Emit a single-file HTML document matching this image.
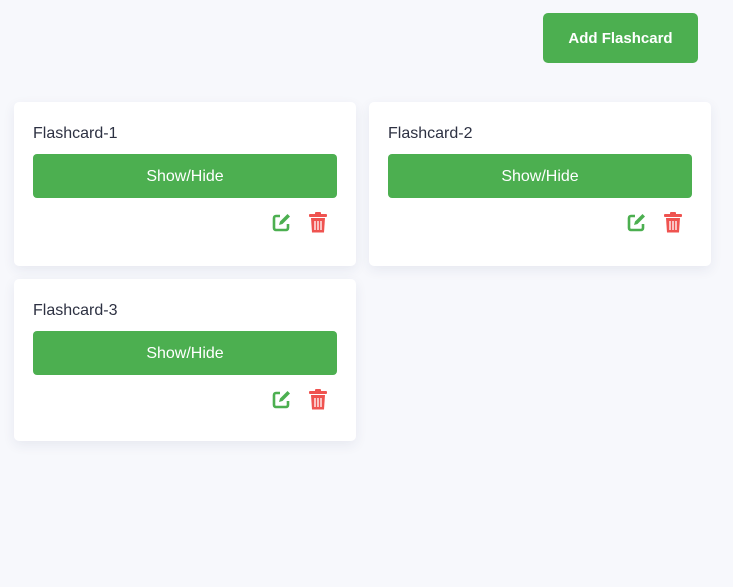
<!DOCTYPE html>
<html><head><style>
body{margin:0;background:#f7f8fc;font-family:"Liberation Sans",sans-serif;width:733px;height:587px;position:relative;overflow:hidden}
.add{position:absolute;left:543px;top:13px;width:155px;height:50px;background:#4caf50;border-radius:5px;color:#fff;font-size:15px;font-weight:bold;display:flex;align-items:center;justify-content:center}
.card{position:absolute;width:342px;height:164px;background:#fff;border-radius:5px;box-shadow:0 4px 12px rgba(40,50,100,0.08)}
.t{position:absolute;left:19px;top:23px;font-size:16px;color:#2d3142}
.b{position:absolute;left:19px;top:52px;width:304px;height:44px;background:#4caf50;border-radius:4px;color:#fff;font-size:16px;display:flex;align-items:center;justify-content:center;padding-top:1px;box-sizing:border-box}
.e{position:absolute;left:257px;top:110px}
.d{position:absolute;left:295px;top:110px}
</style></head><body>
<div class="add">Add Flashcard</div>
<div class="card" style="left:14px;top:102px"><div class="t">Flashcard-1</div><div class="b">Show/Hide</div>
<svg class="e" width="21" height="21" viewBox="0 0 21 21"><path d="M9 4H5a2 2 0 0 0-2 2v10a2 2 0 0 0 2 2h10a2 2 0 0 0 2-2v-4" fill="none" stroke="#4caf50" stroke-width="2.6"/><path d="M8 13l1-3.5 7.5-7.5 2.5 2.5-7.5 7.5z" fill="#4caf50"/></svg>
<svg class="d" width="18" height="21" viewBox="0 0 18 21"><rect x="0" y="2" width="18" height="3" rx="1" fill="#ef5350"/><rect x="6" y="0" width="6" height="3" rx="1" fill="#ef5350"/><path d="M2 6h14l-1 14.5H3z" fill="#ef5350"/><path d="M6 9v9M9 9v9M12 9v9" stroke="#fff" stroke-width="1.3"/></svg></div>
<div class="card" style="left:369px;top:102px"><div class="t">Flashcard-2</div><div class="b">Show/Hide</div>
<svg class="e" width="21" height="21" viewBox="0 0 21 21"><path d="M9 4H5a2 2 0 0 0-2 2v10a2 2 0 0 0 2 2h10a2 2 0 0 0 2-2v-4" fill="none" stroke="#4caf50" stroke-width="2.6"/><path d="M8 13l1-3.5 7.5-7.5 2.5 2.5-7.5 7.5z" fill="#4caf50"/></svg>
<svg class="d" width="18" height="21" viewBox="0 0 18 21"><rect x="0" y="2" width="18" height="3" rx="1" fill="#ef5350"/><rect x="6" y="0" width="6" height="3" rx="1" fill="#ef5350"/><path d="M2 6h14l-1 14.5H3z" fill="#ef5350"/><path d="M6 9v9M9 9v9M12 9v9" stroke="#fff" stroke-width="1.3"/></svg></div>
<div class="card" style="left:14px;top:279px;height:162px"><div class="t">Flashcard-3</div><div class="b">Show/Hide</div>
<svg class="e" width="21" height="21" viewBox="0 0 21 21"><path d="M9 4H5a2 2 0 0 0-2 2v10a2 2 0 0 0 2 2h10a2 2 0 0 0 2-2v-4" fill="none" stroke="#4caf50" stroke-width="2.6"/><path d="M8 13l1-3.5 7.5-7.5 2.5 2.5-7.5 7.5z" fill="#4caf50"/></svg>
<svg class="d" width="18" height="21" viewBox="0 0 18 21"><rect x="0" y="2" width="18" height="3" rx="1" fill="#ef5350"/><rect x="6" y="0" width="6" height="3" rx="1" fill="#ef5350"/><path d="M2 6h14l-1 14.5H3z" fill="#ef5350"/><path d="M6 9v9M9 9v9M12 9v9" stroke="#fff" stroke-width="1.3"/></svg></div>
</body></html>
